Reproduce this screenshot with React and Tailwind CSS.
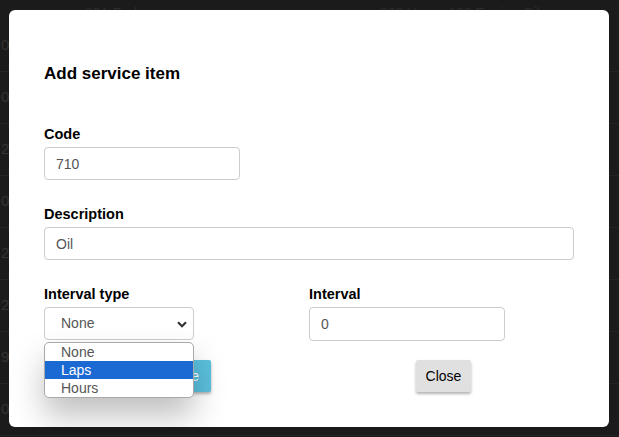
import { useState } from "react";

const bgRows = ["04", "04", "20", "04", "28", "22", "98", "04"];

function Chevron() {
  return (
    <svg width="10" height="7" viewBox="0 0 10 7" className="absolute right-[6px] top-[13px]">
      <path d="M1 1.2 L5 5.2 L9 1.2" fill="none" stroke="#333" strokeWidth="2.2" />
    </svg>
  );
}

export default function App() {
  const [code, setCode] = useState("710");
  const [desc, setDesc] = useState("Oil");
  const [interval, setInterval] = useState("0");
  const options = ["None", "Laps", "Hours"];

  return (
    <div
      className="relative w-[619px] h-[437px] overflow-hidden bg-[#1b1b1b]"
      style={{ fontFamily: '"Liberation Sans", Arial, sans-serif' }}
    >
      {/* page behind the modal */}
      <div className="flex h-[20px] items-start pt-[3px] text-[14px] text-[#2c2c2c]">
        <span className="ml-[85px]">391 Endur</span>
        <span className="ml-[230px]">300 Hours 100 Engine Oil</span>
      </div>
      <div className="flex flex-col">
        {bgRows.map((r, i) => (
          <div key={i} className="h-[52px] border-b border-[#242424] flex items-center pl-[1px] text-[15px] text-[#333]">
            {r}
          </div>
        ))}
      </div>

      {/* modal */}
      <div className="absolute left-[9px] top-[10px] w-[600px] h-[417px] bg-white rounded-[6px] px-[35px] pt-[52px] text-black">
        <h2 className="text-[17px] leading-[24px] font-bold">Add service item</h2>

        <div className="mt-[38px]">
          <label className="block text-[14.5px] leading-[20px] font-bold mb-[3px]">Code</label>
          <input
            className="block w-[196px] h-[33px] border border-[#ccc] rounded-[4px] px-[11px] text-[14px] text-[#555] outline-none"
            value={code}
            onChange={(e) => setCode(e.target.value)}
          />
        </div>

        <div className="mt-6">
          <label className="block text-[14.5px] leading-[20px] font-bold mb-[3px]">Description</label>
          <input
            className="block w-[530px] h-[33px] border border-[#ccc] rounded-[4px] px-[11px] text-[14px] text-[#555] outline-none"
            value={desc}
            onChange={(e) => setDesc(e.target.value)}
          />
        </div>

        <div className="mt-6 grid grid-cols-2 w-[530px]">
          <div>
            <label className="block text-[14.5px] leading-[20px] font-bold mb-[3px]">Interval type</label>
            <div className="relative w-[150px] h-[33px] border border-[#ccc] rounded-[4px] pl-[16px] text-[14px] leading-[31px] text-[#555]">
              None
              <Chevron />
            </div>
          </div>
          <div>
            <label className="block text-[14.5px] leading-[20px] font-bold mb-[3px]">Interval</label>
            <input
              className="block w-[196px] h-[34px] border border-[#ccc] rounded-[4px] px-[11px] text-[14px] text-[#555] outline-none"
              value={interval}
              onChange={(e) => setInterval(e.target.value)}
            />
          </div>
        </div>

        <div className="mt-[19px] grid grid-cols-2 w-[530px]">
          <div className="relative flex justify-center">
            <button className="h-[32px] px-[12px] bg-[#5bc0de] text-white text-[14px] rounded-[2px] shadow-[0_2px_3px_rgba(0,0,0,0.3)]">
              Update
            </button>
            {/* open select list */}
            <div className="absolute left-0 -top-[18px] w-[150px] bg-white border border-[#a8a8a8] rounded-[5px] overflow-hidden shadow-[0_18px_32px_rgba(0,0,0,0.25)]">
              {options.map((o) => (
                <div
                  key={o}
                  className={
                    o === "Laps"
                      ? "h-[18px] leading-[18px] pl-[16px] text-[14px] bg-[#1b6ad4] text-white"
                      : "h-[18px] leading-[18px] pl-[16px] text-[14px] text-[#555]"
                  }
                >
                  {o}
                </div>
              ))}
            </div>
          </div>
          <div className="flex justify-center pl-[4px]">
            <button className="h-[32px] px-[10px] bg-[#e0e0e0] text-black text-[14px] rounded-[2px] shadow-[0_2px_3px_rgba(0,0,0,0.3)]">
              Close
            </button>
          </div>
        </div>
      </div>
    </div>
  );
}
